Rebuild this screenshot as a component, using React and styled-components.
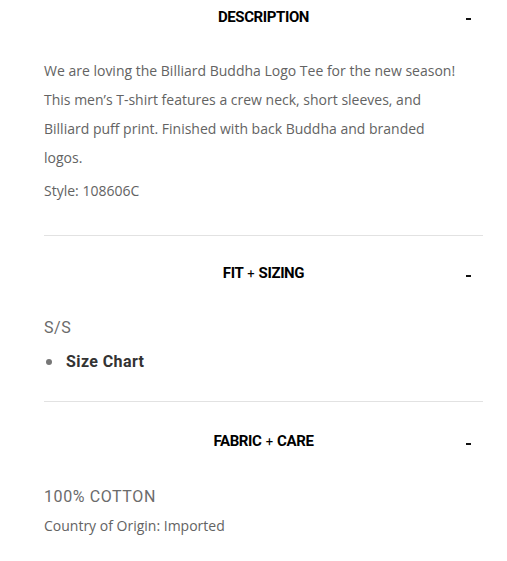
import React from 'react';
import styled, { createGlobalStyle } from 'styled-components';

const GlobalStyle = createGlobalStyle`
  body {
    margin: 0;
    background: #fff;
    font-family: Roboto, "Liberation Sans", sans-serif;
  }
`;

const Wrapper = styled.div`
  width: 439px;
  margin-left: 44px;
`;

const Section = styled.section`
  border-top: ${({ $first }) => ($first ? 'none' : '1px solid #e2e2e2')};
  padding-bottom: ${({ $pb }) => $pb}px;
`;

const Header = styled.div`
  display: grid;
  grid-template-columns: 1fr auto 1fr;
  align-items: center;
  padding-top: ${({ $pt }) => $pt}px;
  height: 18px;
`;

const Title = styled.h3`
  grid-column: 2;
  margin: 0;
  font-family: Roboto, sans-serif;
  font-size: 15px;
  line-height: 18px;
  font-weight: 700;
  letter-spacing: -0.4px;
  color: #000;
  text-transform: uppercase;

  span {
    font-weight: 400;
    font-size: 13px;
    padding: 0 1px;
  }
`;

const Toggle = styled.span`
  justify-self: end;
  margin-right: 12px;
  width: 5px;
  height: 2px;
  background: #111;
  margin-top: 4px;
`;

const Body = styled.div`
  padding-top: ${({ $gap }) => $gap}px;
`;

const Paragraph = styled.p`
  margin: 0;
  max-width: 420px;
  font-family: "Open Sans", sans-serif;
  font-size: 14px;
  line-height: 29px;
  color: #636363;
`;

const Meta = styled.p`
  margin: ${({ $mt }) => $mt}px 0 0;
  font-family: "Open Sans", sans-serif;
  font-size: 14px;
  line-height: 20px;
  color: #636363;
`;

const Lead = styled.p`
  margin: 0;
  font-size: 16px;
  line-height: 20px;
  letter-spacing: 0.6px;
  color: #6b6b6b;
`;

const List = styled.ul`
  list-style: none;
  margin: 14px 0 0;
  padding: 0;
`;

const Item = styled.li`
  display: flex;
  align-items: center;
  gap: 14px;
  font-size: 16px;
  line-height: 20px;
  font-weight: 700;
  letter-spacing: 0.4px;
  color: #333;

  &::before {
    content: '';
    width: 6px;
    height: 6px;
    border-radius: 50%;
    background: #777;
    margin-left: 2px;
  }
`;

const Plus = () => <span>+</span>;

export default function App() {
  return (
    <>
      <GlobalStyle />
      <Wrapper>
        <Section $first $pb={34}>
          <Header $pt={8}>
            <Title>Description</Title>
            <Toggle />
          </Header>
          <Body $gap={30}>
            <Paragraph>
              We are loving the Billiard Buddha Logo Tee for the new season! This men’s T-shirt
              features a crew neck, short sleeves, and Billiard puff print. Finished with back
              Buddha and branded logos.
            </Paragraph>
            <Meta $mt={9}>Style: 108606C</Meta>
          </Body>
        </Section>

        <Section $pb={29}>
          <Header $pt={28}>
            <Title>
              Fit <Plus /> Sizing
            </Title>
            <Toggle />
          </Header>
          <Body $gap={36}>
            <Lead>S/S</Lead>
            <List>
              <Item>Size Chart</Item>
            </List>
          </Body>
        </Section>

        <Section $pb={26}>
          <Header $pt={30}>
            <Title>
              Fabric <Plus /> Care
            </Title>
            <Toggle />
          </Header>
          <Body $gap={37}>
            <Lead>100% COTTON</Lead>
            <Meta $mt={9}>Country of Origin: Imported</Meta>
          </Body>
        </Section>
      </Wrapper>
    </>
  );
}
